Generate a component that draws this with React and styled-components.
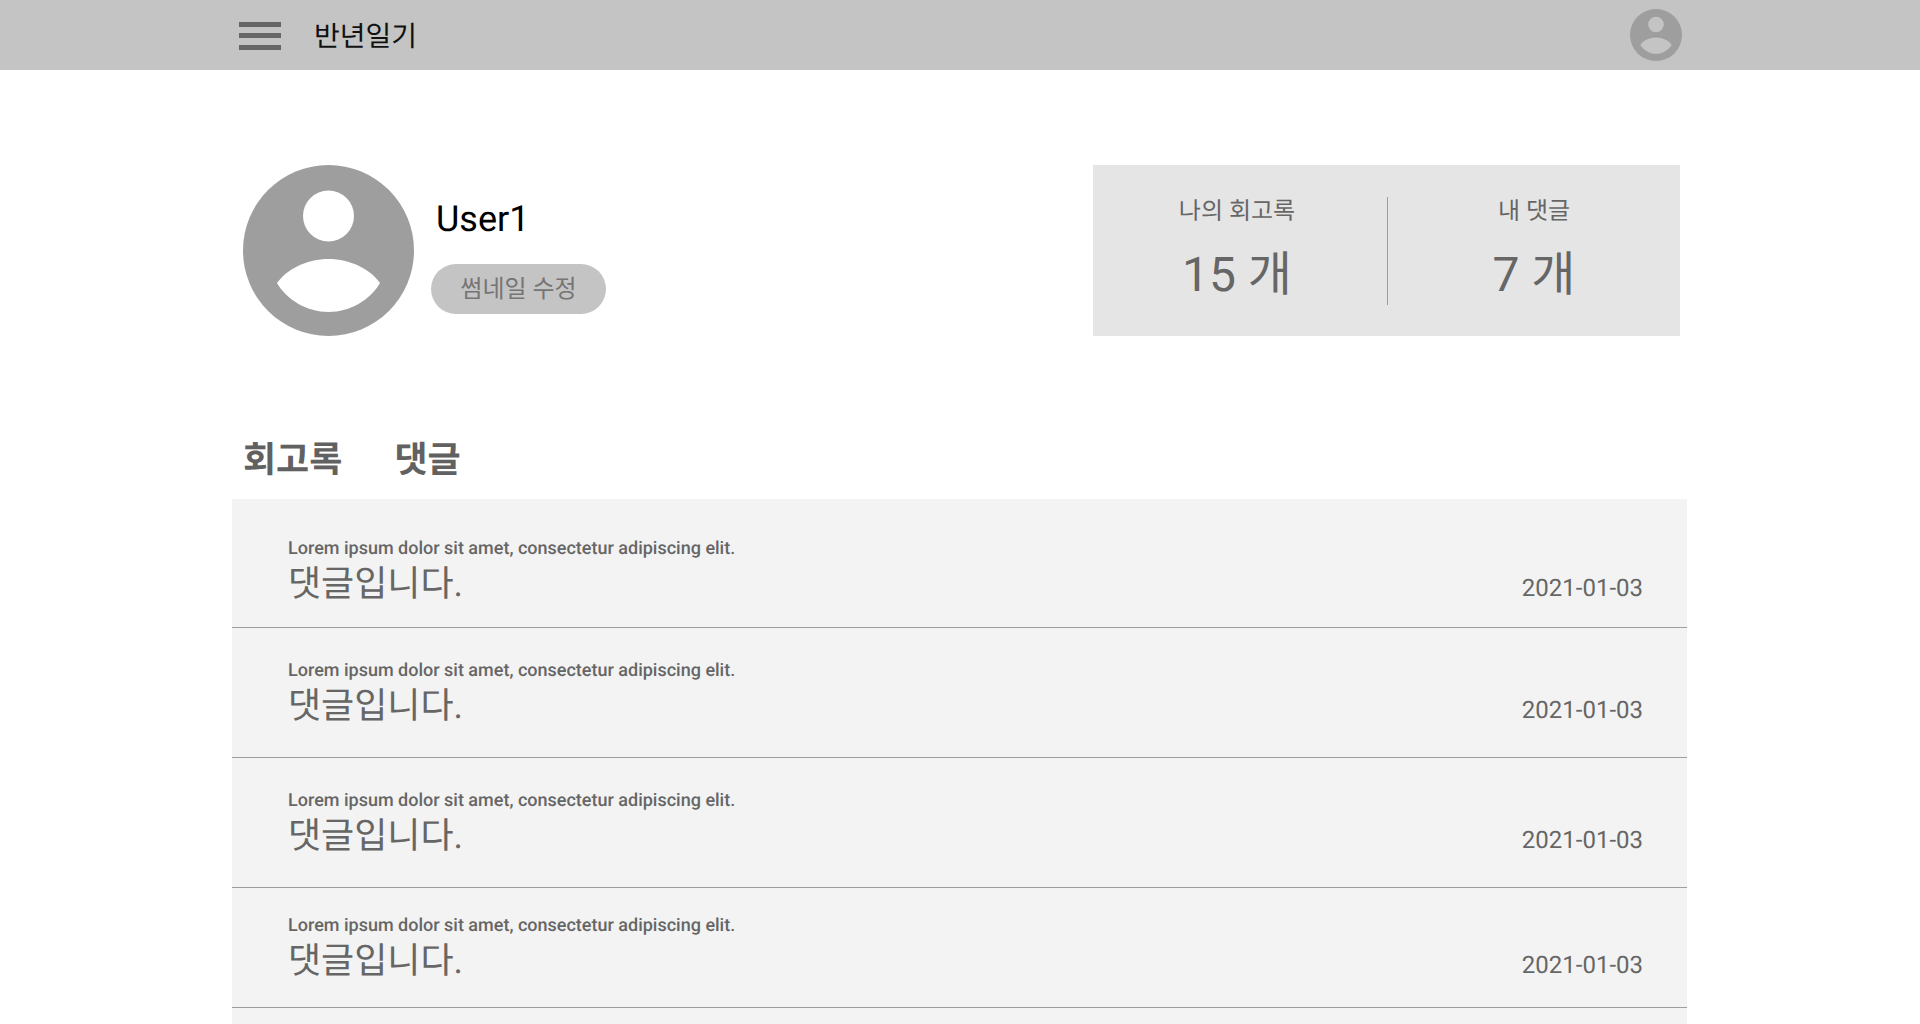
import React from "react";
import styled, { createGlobalStyle } from "styled-components";

const Global = createGlobalStyle`
  html, body { margin: 0; padding: 0; background: #fff; overflow: hidden; height: 1024px; }
  body { font-family: Roboto, "Noto Sans CJK KR", sans-serif; text-rendering: geometricPrecision; }
`;
const Page = styled.div`height: 1024px; overflow: hidden;`;
const Header = styled.header`
  height: 70px; background: #c4c4c4; display: flex; align-items: center;
  padding: 0 238px 0 239px;
`;
const Menu = styled.div`
  width: 42px; height: 28px; display: flex; flex-direction: column; justify-content: space-between;
  margin-right: 33px; margin-top: 1px;
  span { display: block; height: 5px; background: #666; }
`;
const Title = styled.div`flex: 1; font-size: 28px; color: #111;`;
const Wrap = styled.main`padding: 95px 233px 0 232px;`;
const Profile = styled.section`display: flex; justify-content: space-between; padding: 0 7px 0 11px; height: 171px;`;
const Person = styled.div`display: flex;`;
const Info = styled.div`margin-left: 17px; display: flex; flex-direction: column; align-items: flex-start;`;
const Name = styled.div`font-size: 36px; line-height: 42px; color: #000; margin: 33px 0 0 5px;`;
const EditButton = styled.button`
  width: 175px; height: 50px; border: 0; border-radius: 25px; background: #c4c4c4; color: #757575;
  font: 24px Roboto, "Noto Sans CJK KR", sans-serif; padding: 0 0 6px; margin-top: 24px;
`;
const Stats = styled.div`
  width: 587px; background: #e5e5e5; display: grid; grid-template-columns: 294px 1px 292px; padding: 32px 0 31px;
`;
const Divider = styled.div`background: #9e9e9e;`;
const Stat = styled.div`text-align: center; color: #666; padding-right: ${p => p.$inset || 0}px;`;
const StatLabel = styled.div`font-size: 24px; line-height: 26px; margin-top: 1px;`;
const StatValue = styled.div`font-size: 48px; line-height: 56px; margin-top: 23px;`;
const Tabs = styled.nav`display: flex; gap: 52px; margin: 100px 0 0 11px; height: 63px;`;
const Tab = styled.div`font-size: 36px; font-weight: 700; line-height: 48px; color: #616161;`;
const List = styled.div`background: #f3f3f3; min-height: 525px;`;
const Row = styled.article`
  height: ${p => p.$h}px; box-sizing: border-box; border-bottom: 1px solid #9e9e9e;
  padding: ${p => p.$pad}px 44px 0 56px; display: flex; justify-content: space-between; color: #666;
`;
const Lorem = styled.div`font-size: 18px; font-weight: 500; line-height: 21px;`;
const Comment = styled.div`font-size: 36px; line-height: 42px; margin-top: 4px;`;
const DateText = styled.div`font-size: 24px; line-height: 28px; margin-top: 36px;`;

const Avatar = ({ size, bg, fg }) => (
  <svg width={size} height={size} viewBox="0 0 171 171" style={{ flex: "none" }}>
    <circle cx="85.5" cy="85.5" r="85.5" fill={bg} />
    <circle cx="85.5" cy="51" r="25.5" fill={fg} />
    <path d="M34 118 C44 104 64 94 85.5 94 C107 94 127 104 137 118 C127 135 107 147 85.5 147 C64 147 44 135 34 118 Z" fill={fg} />
  </svg>
);

const rows = [
  { h: 129, pad: 39 },
  { h: 130, pad: 32 },
  { h: 130, pad: 32 },
  { h: 120, pad: 27 },
];

export default function App() {
  return (
    <Page>
      <Global />
      <Header>
        <Menu><span /><span /><span /></Menu>
        <Title>반년일기</Title>
        <Avatar size={52} bg="#9e9e9e" fg="#c4c4c4" />
      </Header>
      <Wrap>
        <Profile>
          <Person>
            <Avatar size={171} bg="#9e9e9e" fg="#fff" />
            <Info>
              <Name>User1</Name>
              <EditButton>썸네일 수정</EditButton>
            </Info>
          </Person>
          <Stats>
            <Stat $inset={6}><StatLabel>나의 회고록</StatLabel><StatValue>15 개</StatValue></Stat>
            <Divider />
            <Stat><StatLabel>내 댓글</StatLabel><StatValue>7 개</StatValue></Stat>
          </Stats>
        </Profile>
        <Tabs><Tab>회고록</Tab><Tab>댓글</Tab></Tabs>
        <List>
          {rows.map((r, i) => (
            <Row key={i} $h={r.h} $pad={r.pad}>
              <div>
                <Lorem>Lorem ipsum dolor sit amet, consectetur adipiscing elit.</Lorem>
                <Comment>댓글입니다.</Comment>
              </div>
              <DateText>2021-01-03</DateText>
            </Row>
          ))}
        </List>
      </Wrap>
    </Page>
  );
}
